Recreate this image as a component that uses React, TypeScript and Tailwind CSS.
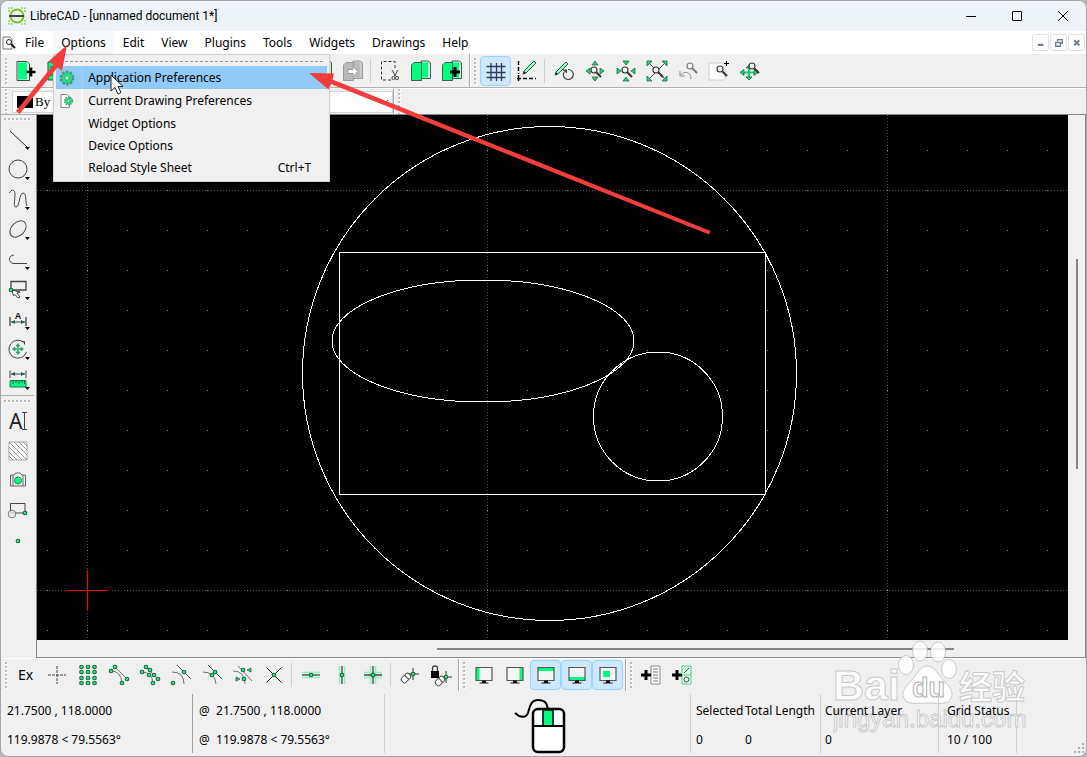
import React from "react";

type IconProps = { children: React.ReactNode };

const GREEN = "#00ff7f";

function Icon({ children }: IconProps) {
  return (
    <svg viewBox="-13 -13 26 26" className="size-6.5 shrink-0" fill="none" stroke="#444" strokeWidth="1" aria-hidden="true">
      {children}
    </svg>
  );
}

function Node({ x, y }: { x: number; y: number }) {
  return <circle cx={x} cy={y} r="1.8" fill={GREEN} stroke="#2c5f45" strokeWidth="1.1" />;
}

function Drop() {
  return <path d="M7 8h5L9.500 11z" fill="#000" stroke="none" />;
}

function Lens({ x = 0, y = 0, color = "#333" }: { x?: number; y?: number; color?: string }) {
  return (
    <g transform={`translate(${x} ${y})`} stroke={color}>
      <circle cx="-1" cy="-1" r="3" fill="#f4f4f4" strokeWidth="1.1" />
      <path d="M1.500 1.500L6 6" strokeWidth="1.9" />
    </g>
  );
}

function Pencil({ x = 0, y = 0 }: { x?: number; y?: number }) {
  return (
    <g transform={`translate(${x} ${y})`}>
      <path d="M-6 6L-5 3L5 -7L7 -5L-3 5Z" fill="#8dffc4" stroke="#2c5f45" />
      <path d="M-6 6l1-3l2 2z" fill="#222" stroke="none" />
    </g>
  );
}

function Plus({ x, y }: { x: number; y: number }) {
  return <path d={`M${x - 5} ${y}h10M${x} ${y - 5}v10`} stroke="#000" strokeWidth="3" />;
}

function Pages({ disabled = false }: { disabled?: boolean }) {
  const fill = disabled ? "#b9b9b9" : GREEN;
  const line = disabled ? "#999" : "#3d5f4e";
  return (
    <>
      <path d="M0 -10H7.500L9.500 -8V7.500H0Z" fill={disabled ? "#ccc" : "#c9f5de"} stroke={line} />
      <path d="M1 -8.500H7V6.500H1Z" fill={fill} stroke="none" />
      <path d="M-9.500 -6L-7 -8.500H0.500V9.500H-9.500Z" fill={fill} stroke={line} />
    </>
  );
}

const IconNew = () => (
  <Icon>
    <path d="M-8 -9.500H2L4.500 -7V9.500H-8Z" fill="#f7f7f7" />
    <path d="M-7 -8.500H2V8.500H-7Z" fill={GREEN} stroke="none" />
    <path d="M1.500 1h9M6 -3.500v9" stroke="#000" strokeWidth="2.600" />
  </Icon>
);
const IconDoc = () => (
  <Icon>
    <path d="M-8 -9H5L8 -6V9H-8Z" fill={GREEN} />
    <path d="M-6 -4h9M-6 0h9M-6 4h9" />
  </Icon>
);
const IconPages = () => <Icon><Pages /></Icon>;
const IconPagesDisabled = () => (
  <Icon>
    <Pages disabled />
    <path d="M-5 -1.500h5v-3L5 0.500L0 5.500v-3h-5z" fill="#fff" stroke="#999" />
  </Icon>
);
const IconPastePlus = () => <Icon><Pages /><Plus x={3} y={1} /></Icon>;
const IconCut = () => (
  <Icon>
    <path d="M5 -3V-9.500H-8.500V9H1" stroke="#333" strokeDasharray="3 2" />
    <path d="M2 -1L5.500 5M8 -1L4.500 5" />
    <circle cx="3.500" cy="7" r="1.600" />
    <circle cx="7" cy="7" r="1.600" />
  </Icon>
);
const IconGrid = () => (
  <Icon>
    <path d="M-9.500 -4.500H9.500M-9.500 1.500H9.500M-9.500 6.500H9.500M-5 -8V10M0.500 -8V10M5.500 -8V10" stroke="#2b3f50" strokeWidth="1.300" />
  </Icon>
);
const IconDraft = () => (
  <Icon>
    <path d="M-8.500 -10V3" stroke="#000" strokeDasharray="4 2" strokeWidth="1.500" />
    <path d="M-10 7.500H9" stroke="#000" strokeDasharray="4 2" strokeWidth="1.500" />
    <path d="M-8.500 4v6" stroke="#000" strokeWidth="1.500" />
    <Pencil x={2} y={-3} />
  </Icon>
);
const IconRedraw = () => (
  <Icon>
    <Pencil x={-3} y={-2} />
    <path d="M0 1A5 5 0 1 0 4 -1.500" strokeWidth="1.200" />
    <path d="M-2 -1.500h5v4z" fill="#444" stroke="none" />
  </Icon>
);
const arrowStyle = { fill: "#18dc78", stroke: "#2c5f45", strokeWidth: 0.8 };
const IconZoomIn = () => (
  <Icon>
    <path {...arrowStyle} d="M-3 -6h6l-3-4zM-3 6h6l-3 4zM-5 -3v6l-4-3zM5 -3v6l4-3z" />
    <Lens />
  </Icon>
);
const IconZoomOut = () => (
  <Icon>
    <path {...arrowStyle} d="M-3 -10h6l-3 4zM-3 10h6l-3-4zM-9 -3v6l4-3zM9 -3v6l-4-3z" />
    <Lens />
  </Icon>
);
const IconZoomAuto = () => (
  <Icon>
    <path d="M-9 -9L9 9M9 -9L-9 9" />
    <path {...arrowStyle} d="M-10 -10h5l-5 5zM10 -10h-5l5 5zM-10 10h5l-5-5zM10 10h-5l5-5z" />
    <Lens />
  </Icon>
);
const IconZoomPrev = () => (
  <Icon>
    <path d="M3 8C3 0 -4 0 -7 4M-8 0v5h5" stroke="#8d8d8d" />
    <Lens x={3} y={-4} color="#777" />
  </Icon>
);
const IconZoomWindow = () => (
  <Icon>
    <path d="M-10 -8H6V9H-10Z" fill="#fff" stroke="#ccc" />
    <path d="M5 -7.500h5M7.500 -10v5" stroke="#000" />
    <Lens x={2} y={-1} />
  </Icon>
);
const IconPan = () => (
  <Icon>
    <path d="M-8 1.500H6M-1 -5V8" stroke="#19c870" strokeWidth="2.200" />
    <path {...arrowStyle} d="M-4 -3h6l-3-3zM-4 6h6l-3 3zM-6 -1.500v6l-4-3zM4 -1.500v6l4-3z" />
    <Lens x={3} y={-4} />
  </Icon>
);

const drawIcons: [string, React.ReactNode][] = [
  ["Line", <Icon><path d="M-8 -8L9 8" stroke="#222" /><Drop /></Icon>],
  ["Circle", <Icon><circle r="9" /><Drop /></Icon>],
  ["Curve", <Icon><path d="M-8.500 -6C-7 -10 -3 -10 -3 -5C-3 1 -5 8 -2 8C2 8 1 -6 5 -6C9 -6 7 4 9 7" /><Drop /></Icon>],
  ["Ellipse", <Icon><ellipse rx="9.500" ry="6.500" transform="rotate(-45)" /><Drop /></Icon>],
  ["Polyline", <Icon><path d="M-4 -4C-10 -4 -10 4.500 -4 4.500H9" /><Drop /></Icon>],
  ["Select", (
    <Icon>
      <path d="M-7 -7.500H8V1H-7Z" strokeWidth="1.300" />
      <path d="M-6 1L-4.500 7L-3 5.500L0 9L2 8L-1 4L2 3Z" fill="#fff" />
      <Node x={-7} y={1} /><Drop />
    </Icon>
  )],
  ["Dimension", (
    <Icon>
      <text x="0" y="0" textAnchor="middle" className="font-['Liberation_Sans'] text-[9px] font-bold" fill="#111" stroke="none">A</text>
      <path d="M-8 -2V7M8 -2V7" strokeWidth="1.300" />
      <path d="M-7 3H7" /><path d="M-7 3l4-2v4zM7 3l-4-2v4z" fill="#156b40" stroke="none" /><Drop />
    </Icon>
  )],
  ["Modify", (
    <Icon>
      <path d="M6 -6.500A9 9 0 1 0 8.500 3M3 -7.500h3.500v3" />
      <path d="M-4 0H4M0 -4V4" stroke="#19c870" strokeWidth="1.600" />
      <path d="M-2 -3h4l-2-2.500zM-2 3h4l-2 2.500zM-3 -2v4l-2.500-2zM3 -2v4l2.500-2z" fill="#19c870" stroke="#2c5f45" strokeWidth=".5" /><Drop />
    </Icon>
  )],
  ["Info", (
    <Icon>
      <path d="M-8 -8.500V-1M8 -8.500V-1M-7 -5H7" />
      <path d="M-7 -5l4-2v4zM7 -5l-4-2v4z" fill="#156b40" stroke="none" />
      <path d="M-8 1.500H8V8H-8Z" fill={GREEN} stroke="#28744d" />
      <path d="M-5 2v3M-2 2v2M1 2v3M4 2v2M6.500 2v3" stroke="#145c38" /><Drop />
    </Icon>
  )],
];

const blockIcons: [string, React.ReactNode][] = [
  ["Text", (
    <Icon>
      <text x="-9" y="8" className="font-['Noto_Sans'] text-[21px]" fill="#222" stroke="none">A</text>
      <path d="M4 -8.500h5M4 8.500h5M6.500 -8.500v17" />
    </Icon>
  )],
  ["Hatch", (
    <Icon>
      <path d="M-9 -9H9V9H-9Z" fill="#fff" stroke="#aaa" />
      <path d="M-9 -4L4 9M-9 1L-1 9M-9 5L-5 9M-9 -9L9 9M-4 -9L9 4M1 -9L9 -1M5 -9L9 -5" stroke="#777" strokeWidth=".8" />
    </Icon>
  )],
  ["Image", (
    <Icon>
      <path d="M-7.500 -6H-4L-2 -8H2L4 -6H7.500V5H-7.500ZM-5 -6V5M5 -6V5" stroke="#666" />
      <circle cy="-0.500" r="3.500" fill={GREEN} stroke="#2c8f60" />
    </Icon>
  )],
  ["Block", (
    <Icon>
      <path d="M-7.500 -7.500H7V2H-7.500Z" />
      <circle cx="-6" cy="3" r="3.800" fill="#f0f0f0" fillOpacity=".7" stroke="#777" />
      <Node x={7} y={2} />
    </Icon>
  )],
  ["Point", <Icon><Node x={0} y={0} /></Icon>],
];

const Gmk = ({ x, y, r = 7 }: { x: number; y: number; r?: number }) => (
  <>
    <path d={`M${x - r} ${y}h${2 * r}M${x} ${y - r}v${2 * r}`} stroke="#333" />
    <Node x={x} y={y} />
  </>
);
const Tag = ({ x, y }: { x: number; y: number }) => (
  <g transform={`translate(${x} ${y}) rotate(-45)`}>
    <rect x="-5" y="-3" width="10" height="6" rx="2" fill="#fff" />
    <path d="M1 -3v6" />
  </g>
);

const snapIcons: ([string, React.ReactNode] | null)[] = [
  ["Free snap", <Icon><path d="M-9 0H9M0 -9V9" strokeDasharray="3 1" /></Icon>],
  ["Snap on grid", <Icon>{[-8, -3, 3, 8].map((y) => [-6.5, 0, 6.5].map((x) => <Node key={`${x},${y}`} x={x} y={y} />))}</Icon>],
  ["Snap on endpoints", (
    <Icon>
      <path d="M-4 -8L8 4M-8 -4Q2 -4 3 8" stroke="#777" />
      <Node x={-4} y={-8} /><Node x={-8} y={-4} /><Node x={8} y={4} /><Node x={3} y={8} />
    </Icon>
  )],
  ["Snap on entity", (
    <Icon>
      <path d="M-4 -8L8 4M-8 -3Q2 -3 3 8" stroke="#777" />
      <Node x={-4} y={-8} /><Node x={0} y={-5} /><Node x={-8} y={-3} /><Node x={-1} y={0} /><Node x={4} y={0} /><Node x={8} y={4} /><Node x={3} y={8} />
    </Icon>
  )],
  ["Snap center", <Icon><path d="M-9 -3Q3 -3 3 9" stroke="#776d6d" /><path d="M-4 -10L10 4" /><Node x={3} y={-3} /><Node x={-8} y={8} /></Icon>],
  ["Snap middle", <Icon><path d="M-9 -3Q3 -3 4 9" stroke="#776d6d" /><path d="M-4 -10L10 4" /><Node x={3} y={-3} /><Node x={0} y={0} /></Icon>],
  ["Snap distance", (
    <Icon>
      <path d="M-5 -9L9 6M-10 -4Q2 -4 2 9" stroke="#777" />
      <Node x={0} y={-5} /><Node x={1} y={4} />
      <path {...arrowStyle} d="M8 -7v4l-4-2zM-7 2v4l4-2z" />
    </Icon>
  )],
  ["Snap intersection", <Icon><path d="M-7.500 -7.500L7.500 7.500M7.500 -7.500L-7.500 7.500" stroke="#222" /><Node x={0} y={0} /></Icon>],
  null,
  ["Restrict horizontal", <Icon><path d="M-9 -2.500H9M-9 2.500H9" stroke="#8df0bd" strokeWidth="1.500" /><path d="M-9 0H9" strokeWidth="1.300" /><Node x={0} y={0} /></Icon>],
  ["Restrict vertical", <Icon><path d="M-2.500 -9V9M2.500 -9V9" stroke="#8df0bd" strokeWidth="1.500" /><path d="M0 -9V9" strokeWidth="1.300" /><Node x={0} y={0} /></Icon>],
  ["Restrict orthogonal", (
    <Icon>
      <path d="M-9 -2.500H9M-9 2.500H9M-2.500 -9V9M2.500 -9V9" stroke="#8df0bd" strokeWidth="1.500" />
      <path d="M-9 0H9M0 -9V9" strokeWidth="1.300" /><Node x={0} y={0} />
    </Icon>
  )],
  null,
  ["Set relative zero", <Icon><Gmk x={3} y={-1} r={6} /><Tag x={-4} y={3} /></Icon>],
  ["Lock relative zero", (
    <Icon>
      <path d="M-10 -4H-2V3H-10Z" fill="#000" stroke="none" />
      <path d="M-8.500 -4V-7Q-8.500 -9 -6 -9Q-3.500 -9 -3.500 -7V-4" strokeWidth="1.300" />
      <Gmk x={5} y={2} r={6} /><Tag x={-1} y={6} />
    </Icon>
  )],
];

const Monitor = ({ fill }: { fill: string }) => (
  <Icon>
    <path d="M-8 -7.500H8V5.500H-8Z" fill="#f5f5f5" stroke="none" />
    <path d={fill} fill={GREEN} stroke="none" />
    <path d="M-8 -7.500H8V5.500H-8Z" stroke="#555" strokeWidth="1.200" />
    <path d="M-2 5.500h4v2h2.500v1h-9v-1h2.500z" fill="#111" stroke="none" />
  </Icon>
);

function Grip({ horizontal = false }: { horizontal?: boolean }) {
  const dots = [0, 4, 8, 12, 16, 20, 24];
  return (
    <svg
      viewBox={horizontal ? "0 0 28 5" : "0 0 5 28"}
      className={horizontal ? "mx-auto h-[5px] w-7 shrink-0" : "h-7 w-[5px] shrink-0"}
      shapeRendering="crispEdges"
      aria-hidden="true"
    >
      {dots.map((d) => (
        <g key={d}>
          <rect x={horizontal ? d + 1 : 2} y={horizontal ? 2 : d + 2} width="2" height="2" fill="#fff" />
          <rect x={horizontal ? d : 1} y={horizontal ? 1 : d + 1} width="2" height="2" fill="#bbb" />
        </g>
      ))}
    </svg>
  );
}

function ToolButton({ label, on = false, children }: { label: string; on?: boolean; children: React.ReactNode }) {
  return (
    <button
      type="button"
      aria-label={label}
      className={`flex h-[30px] w-[31px] shrink-0 items-center justify-center ${on ? "rounded-sm border border-[#99d1ff] bg-[#cce8ff]" : ""}`}
    >
      {children}
    </button>
  );
}

const Rule = () => <div className="mx-0.5 h-6 w-0.5 shrink-0 border-l border-[#cfcfcf]" />;
const BarEnd = () => <div className="h-full w-0.5 shrink-0 border-l border-[#a8a8a8] bg-white" />;

function Drawing() {
  return (
    <svg className="size-full min-h-0 bg-black" fill="none" stroke="#fff" shapeRendering="crispEdges" role="img" aria-label="Drawing">
      <defs>
        <pattern id="dots" width="40" height="40" patternUnits="userSpaceOnUse">
          <rect x="10" y="35" width="1" height="1" fill="#8a8a8a" stroke="none" />
        </pattern>
      </defs>
      <g stroke="#505050" strokeDasharray="1 2">
        {[50.5, 450.5, 850.5].map((x) => <line key={x} x1={x} x2={x} y1="0" y2="100%" />)}
        {[75.5, 475.5].map((y) => <line key={y} x1="0" x2="100%" y1={y} y2={y} />)}
      </g>
      <rect width="100%" height="100%" fill="url(#dots)" stroke="none" />
      <circle cx="512.500" cy="258.500" r="247" />
      <rect x="302.500" y="137.500" width="426" height="242" />
      <ellipse cx="446" cy="226" rx="151" ry="61" />
      <circle cx="621" cy="301.500" r="64.500" />
      <path d="M30 475.500H71M50.500 455V496" stroke="#f00" />
    </svg>
  );
}

const gearShape = (
  <>
    <circle r="6.300" fill="none" stroke="#3c9c70" strokeWidth="2.200" strokeDasharray="2.500 1.458" />
    <circle r="5.300" fill="#19e884" stroke="#3c9c70" strokeWidth=".8" />
    <circle r="2.400" fill="#b4f3d2" stroke="#3c9c70" />
  </>
);

const menuItems: { label: string; key?: string; icon?: React.ReactNode; active?: boolean }[] = [
  {
    label: "Application Preferences",
    icon: <svg viewBox="-8 -8 16 16" className="size-4" aria-hidden="true">{gearShape}</svg>,
    active: true,
  },
  {
    label: "Current Drawing Preferences",
    icon: (
      <svg viewBox="-8 -8 16 16" className="size-4" aria-hidden="true">
        <path d="M-6 -6.500H0L2.500 -4V6.500H-6Z" fill="#fff" stroke="#888" />
        <g transform="translate(1.500 0) scale(.62)">{gearShape}</g>
      </svg>
    ),
  },
  { label: "Widget Options" },
  { label: "Device Options" },
  { label: "Reload Style Sheet", key: "Ctrl+T" },
];

function OptionsMenu() {
  return (
    <div role="menu" className="absolute top-full left-0 z-30 w-[277px] border border-[#d0d0d0] bg-[#f0f0f0] p-0.5 shadow-sm">
      <div className="mx-1 mt-1 mb-1 border-t border-dashed border-[#999]" />
      {menuItems.map((m, i) => (
        <button
          key={m.label}
          type="button"
          role="menuitem"
          className={`flex w-full items-center whitespace-nowrap pr-4 text-left ${i < 3 ? "h-[23px]" : "h-[22px]"} ${m.active ? "bg-[#91c9f7]" : ""}`}
        >
          <span className={`mr-[5px] flex w-[27px] shrink-0 items-center self-stretch border-r-2 pl-[3px] ${m.active ? "border-[#9bcdf8]" : "border-[#f8f8f8]"}`}>{m.icon}</span>
          <span className="flex-1">{m.label}</span>
          {m.key && <span>{m.key}</span>}
        </button>
      ))}
    </div>
  );
}

function Combo({ label, swatch = false }: { label: string; swatch?: boolean }) {
  return (
    <label className="flex h-[22px] w-[127px] items-center gap-0.5 border border-[#d4d4d4] bg-white px-1">
      {swatch && <span className="h-3 w-4 shrink-0 bg-black" />}
      <select aria-label={label} className="w-full appearance-none bg-transparent font-['Liberation_Serif',serif] text-[13px]">
        <option>By Layer</option>
      </select>
      <svg viewBox="0 0 6 4" className="h-1 w-1.5 shrink-0" fill="none" stroke="#555"><path d="M0 0L3 3L6 0" /></svg>
    </label>
  );
}

function StatusCell({ className, top, bottom }: { className: string; top: string; bottom: string }) {
  return (
    <div className={`relative z-10 shrink-0 pt-0.5 leading-[29px] whitespace-pre ${className}`}>
      <div>{top}</div>
      <div>{bottom}</div>
    </div>
  );
}

function Watermark() {
  return (
    <svg viewBox="0 0 200 96" className="pointer-events-none absolute right-[53px] bottom-5 h-24 w-[200px]" fill="#fff" fillOpacity=".85" stroke="#bdbdbd" strokeWidth="1" strokeOpacity=".8" aria-hidden="true">
      <text x="0" y="60" className="font-['Liberation_Sans'] text-[43px] font-bold">Bai</text>
      <ellipse cx="73" cy="25" rx="7.500" ry="9.500" />
      <ellipse cx="87" cy="11" rx="7.500" ry="10" />
      <ellipse cx="105" cy="12" rx="7.500" ry="10" />
      <ellipse cx="116" cy="29" rx="7.500" ry="9.500" />
      <path d="M94 26C102 26 106 36 112 42C119 49 121 54 117 60C113 65 104 63 95 63C86 63 77 65 72 60C68 54 70 49 77 42C83 36 87 26 94 26Z" />
      <text x="79" y="57" className="font-['Liberation_Sans'] text-[27px] font-bold" stroke="#999">du</text>
      <text x="126" y="59" className="font-['Noto_Sans_CJK_SC',sans-serif] text-[33px] font-bold">经验</text>
      <text x="0" y="87" className="font-['Liberation_Sans'] text-[24px]">jingyan.baidu.com</text>
    </svg>
  );
}

export default function App() {
  return (
    <div className="h-screen overflow-hidden bg-[#b8b8b8]">
      <div className="relative flex h-full flex-col overflow-hidden rounded-lg border border-[#a5a5a5] bg-[#f0f0f0] font-['Noto_Sans',sans-serif] text-xs text-black">
        <header className="flex h-[30px] shrink-0 items-center bg-[#eef3f9] pl-[7px]">
          <svg viewBox="0 0 18 18" className="mr-1 size-[18px]" fill="none" stroke="#7ac51d" aria-hidden="true">
            <path d="M1 5V1H5M13 1H17V5M17 13V17H13M5 17H1V13" strokeWidth="1.200" strokeDasharray="2 1" />
            <circle cx="9" cy="9" r="6.500" strokeWidth="2" />
            <path d="M1 9H16" stroke="#444" strokeWidth="2.200" />
          </svg>
          <h1 className="flex-1 font-['Roboto',sans-serif] text-xs">LibreCAD - [unnamed document 1*]</h1>
          <div className="flex h-full">
            <button type="button" aria-label="Minimize" className="flex w-[46px] items-center justify-center"><span className="h-px w-2.5 bg-black" /></button>
            <button type="button" aria-label="Maximize" className="flex w-[46px] items-center justify-center"><span className="size-2.5 rounded-[1px] border border-black" /></button>
            <button type="button" aria-label="Close" className="flex w-[46px] items-center justify-center">
              <svg viewBox="0 0 10 10" className="size-2.5" stroke="#000"><path d="M0 0L10 10M10 0L0 10" /></svg>
            </button>
          </div>
        </header>

        <nav className="flex h-[23px] shrink-0 items-center gap-px bg-white">
          <svg viewBox="0 0 14 14" className="ml-px size-[14px]" fill="none" stroke="#777" aria-hidden="true">
            <path d="M1 1H8L10 3V13H1Z" fill="#fff" />
            <circle cx="7" cy="6" r="2.500" stroke="#222" />
            <path d="M9 8L13 12" stroke="#222" strokeWidth="2" />
          </svg>
          <button type="button" className="h-full px-2">File</button>
          <div className="relative h-full">
            <button type="button" className="h-full bg-[#f7f8f9] px-2">Options</button>
            <OptionsMenu />
          </div>
          {["Edit", "View", "Plugins", "Tools", "Widgets", "Drawings", "Help"].map((m) => (
            <button key={m} type="button" className="h-full px-2">{m}</button>
          ))}
          <div className="ml-auto flex gap-px pr-px text-[#70808f]">
            {[
              ["Minimize document", "M5 10.500H11"],
              ["Restore document", "M7 7V5H12V9H10M5 8H10V12H5Z"],
              ["Close document", "M5.500 5.500L11 11M11 5.500L5.500 11"],
            ].map(([label, d]) => (
              <button key={label} type="button" aria-label={label} className="size-[17px] rounded-xs border border-[#e0e0e0] bg-white">
                <svg viewBox="0 0 16 16" className="size-full" fill="none" stroke="currentColor" strokeWidth={label === "Restore document" ? "1.400" : "2.200"}><path d={d} /></svg>
              </button>
            ))}
          </div>
        </nav>

        <div className="flex h-[34px] shrink-0 items-center border-b border-[#b0b0b0] pl-[3px]">
          <Grip />
          <div className="flex items-center">
            <ToolButton label="New"><IconNew /></ToolButton>
            {["New from template", "Open", "Save", "Save as"].map((l) => <ToolButton key={l} label={l}><IconDoc /></ToolButton>)}
            <Rule />
            <ToolButton label="Export"><IconDoc /></ToolButton>
            <Rule />
            {["Print", "Print preview"].map((l) => <ToolButton key={l} label={l}><IconDoc /></ToolButton>)}
            <Rule />
            <ToolButton label="Select"><IconPages /></ToolButton>
            <ToolButton label="Undo"><IconPages /></ToolButton>
            <ToolButton label="Redo"><IconPagesDisabled /></ToolButton>
            <Rule />
            <ToolButton label="Cut"><IconCut /></ToolButton>
            <ToolButton label="Copy"><IconPages /></ToolButton>
            <ToolButton label="Paste"><IconPastePlus /></ToolButton>
          </div>
          <div className="ml-0.5 flex h-full items-center gap-0.5"><BarEnd /><Grip /></div>
          <div className="ml-0.5 flex items-center">
            <ToolButton label="Grid" on><IconGrid /></ToolButton>
            <ToolButton label="Draft"><IconDraft /></ToolButton>
            <Rule />
            <ToolButton label="Redraw"><IconRedraw /></ToolButton>
            <ToolButton label="Zoom in"><IconZoomIn /></ToolButton>
            <ToolButton label="Zoom out"><IconZoomOut /></ToolButton>
            <ToolButton label="Auto zoom"><IconZoomAuto /></ToolButton>
            <ToolButton label="Previous view"><IconZoomPrev /></ToolButton>
            <ToolButton label="Window zoom"><IconZoomWindow /></ToolButton>
            <ToolButton label="Zoom panning"><IconPan /></ToolButton>
          </div>
        </div>

        <div className="flex h-[26px] shrink-0 items-center overflow-hidden border-t border-white pl-[3px]">
          <Grip />
          <div className="ml-[3px] flex">
            <Combo label="Line color" swatch />
            <Combo label="Line width" />
            <Combo label="Line type" />
          </div>
          <div className="flex h-full items-center gap-0.5"><BarEnd /><Grip /></div>
        </div>

        <div className="flex min-h-0 flex-1">
          <aside className="flex w-[35px] shrink-0 flex-col items-center overflow-hidden border-t border-[#b0b0b0] pt-0.5 pr-0.5">
            <Grip horizontal />
            <div className="mt-0.5 flex flex-col">
              {drawIcons.map(([label, icon]) => <ToolButton key={label} label={label}>{icon}</ToolButton>)}
            </div>
            <div className="mt-px mb-[3px] w-full border-t border-[#b0b0b0]" />
            <Grip horizontal />
            <div className="mt-0.5 flex flex-col">
              {blockIcons.map(([label, icon]) => <ToolButton key={label} label={label}>{icon}</ToolButton>)}
            </div>
          </aside>
          <main className="grid min-w-0 flex-1 grid-cols-[1fr_17px] grid-rows-[1fr_17px] border border-[#828790]">
            <div className="min-h-0 overflow-hidden"><Drawing /></div>
            <div className="flex flex-col items-center pt-[144px]"><div className="h-[210px] w-0.5 bg-[#858585]" /></div>
            <div className="flex items-center pl-[400px]"><div className="h-0.5 w-[517px] bg-[#858585]" /></div>
          </main>
        </div>

        <div className="flex h-[33px] shrink-0 items-center border-t border-white pl-[3px]">
          <Grip />
          <div className="ml-px flex items-center">
            <ToolButton label="Exclusive snap mode"><span className="text-sm">Ex</span></ToolButton>
            {snapIcons.map((item, i) => item ? <ToolButton key={i} label={item[0]}>{item[1]}</ToolButton> : <Rule key={i} />)}
          </div>
          <div className="ml-0.5 flex h-full items-center gap-0.5"><BarEnd /><Grip /></div>
          <div className="ml-px flex items-center">
            <ToolButton label="Left dock area"><Monitor fill="M-8 -7.500H-4.500V5.500H-8Z" /></ToolButton>
            <ToolButton label="Right dock area"><Monitor fill="M4.500 -7.500H8V5.500H4.500Z" /></ToolButton>
            <ToolButton label="Top dock area" on><Monitor fill="M-8 -7.500H8V-4H-8Z" /></ToolButton>
            <ToolButton label="Bottom dock area" on><Monitor fill="M-8 2H8V5.500H-8Z" /></ToolButton>
            <ToolButton label="Floating docks" on><Monitor fill="M-5 -4H2V2H-5Z" /></ToolButton>
          </div>
          <div className="ml-0.5 flex h-full items-center gap-0.5"><BarEnd /><Grip /></div>
          <div className="ml-px flex items-center">
            <ToolButton label="Add menu">
              <Icon><path d="M0 -9H9V9H0Z" fill="#fff" stroke="#888" /><path d="M2 -6h5M2 -3h5M2 0h5M2 3h5M2 6h5" stroke="#777" /><Plus x={-5} y={0} /></Icon>
            </ToolButton>
            <ToolButton label="Add toolbar">
              <Icon><path d="M0 -9H9V9H0ZM0 0H9" fill="#e3fff1" stroke="#4fcf8f" /><path d="M2 -2L7 -7" /><circle cx="4.500" cy="4.500" r="2.500" /><Plus x={-5} y={0} /></Icon>
            </ToolButton>
          </div>
        </div>

        <footer className="flex h-[65px] shrink-0 items-stretch py-[3px]">
          <StatusCell className="w-[191px] pl-1.5" top="21.7500 , 118.0000" bottom="119.9878 < 79.5563°" />
          <StatusCell className="w-[192px] border-l border-[#a0a0a0] pl-1.5" top="@  21.7500 , 118.0000" bottom="@  119.9878 < 79.5563°" />
          <div className="flex min-w-0 flex-1 items-center justify-center border-l border-[#d0d0d0] pt-[5px] pl-1">
            <svg viewBox="0 0 54 56" className="h-14 w-[54px]" fill="none" stroke="#000" aria-hidden="true">
              <path d="M2 15C6 19 13 21 15 15C17 8 18 2 25 2C32 2 34 5 35 11" strokeWidth="2" />
              <rect x="20" y="11" width="31" height="43" rx="5" fill="#fff" strokeWidth="2.500" />
              <path d="M30 12H40V28H30Z" fill={GREEN} strokeWidth="1.500" />
              <path d="M20 28H51" strokeWidth="2" />
            </svg>
          </div>
          <StatusCell className="w-[55px] border-l border-[#d0d0d0] pl-[5px]" top="Selected" bottom="0" />
          <StatusCell className="w-[75px]" top="Total Length" bottom="0" />
          <StatusCell className="w-[118px] border-l border-[#d0d0d0] pl-1" top="Current Layer" bottom="0" />
          <StatusCell className="w-[78px] border-l border-[#d0d0d0] pl-2" top="Grid Status" bottom="10 / 100" />
          <div className="flex w-[70px] shrink-0 items-end justify-end border-l border-[#d0d0d0] pr-0.5">
            <svg viewBox="0 0 10 10" className="size-2.5" fill="#b0b0b0" aria-hidden="true">
              <path d="M8 0h2v2h-2zM4 4h2v2h-2zM8 4h2v2h-2zM0 8h2v2h-2zM4 8h2v2h-2zM8 8h2v2h-2z" />
            </svg>
          </div>
        </footer>
        <Watermark />
      </div>

      <svg className="pointer-events-none absolute top-0 left-0 z-40 h-64 w-[720px]" aria-hidden="true">
        <path d="M111 75V91L115 87.500L118 94L121 92.500L118 86.500H123Z" fill="#fff" stroke="#222" />
        <g fill="#f23d3d">
          <path d="M67 45L62 71L57.500 67.500L19.500 114L16 111L53.500 64.500L49 61Z" />
          <path d="M309 73L334 73.500L332.500 79.500L710.500 231L709 234.500L331 84L328.500 89.500Z" />
        </g>
      </svg>
    </div>
  );
}
